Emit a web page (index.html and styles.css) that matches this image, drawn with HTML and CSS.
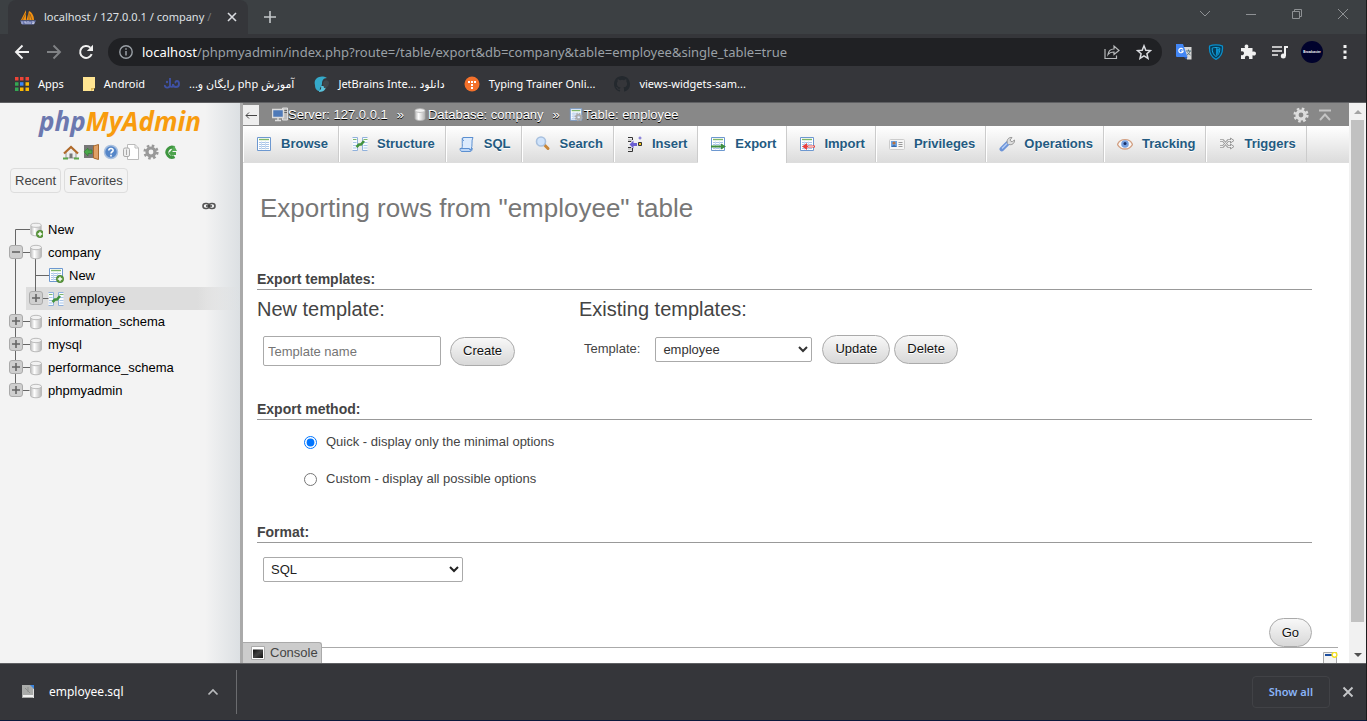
FILE: index.html
```html
<!DOCTYPE html>
<html lang="en">
<head>
<meta charset="utf-8">
<title>localhost / 127.0.0.1 / company / employee | phpMyAdmin</title>
<link rel="stylesheet" href="styles.css">
</head>
<body>
<svg class="defs" aria-hidden="true">
  <defs>
    <linearGradient id="cyl" x1="0" x2="1" y1="0" y2="0"><stop offset="0" stop-color="#bbb"/><stop offset=".35" stop-color="#fff"/><stop offset="1" stop-color="#b4b4b4"/></linearGradient>
    <linearGradient id="term" x1="0" x2="1" y1="0" y2="1"><stop offset="0" stop-color="#111"/><stop offset=".5" stop-color="#444"/><stop offset="1" stop-color="#111"/></linearGradient>
    <symbol id="db" viewBox="0 0 16 16"><path d="M2.500 3.500v9c0 3 11 3 11 0v-9" fill="url(#cyl)" stroke="#bbb"/><ellipse cx="8" cy="3.500" rx="5.500" ry="2.200" fill="#f2f2f2" stroke="#bbb"/></symbol>
    <symbol id="add" viewBox="0 0 16 16"><circle cx="12" cy="12" r="3.700" fill="#5b9a3c" stroke="#3f7a28" stroke-width=".6"/><path d="M12 9.800v4.400M9.800 12h4.400" stroke="#fff" stroke-width="1.400"/></symbol>
    <symbol id="table" viewBox="0 0 16 16"><path d="M1.500 1.500h13v13h-13z" fill="#fff" stroke="#6d98d0"/><path d="M3 3.500h10" stroke="#7fb76b" stroke-width="1.400"/><path d="M3 6.500h10M3 8.500h10M3 10.500h10M3 12.500h10" stroke="#a9c5e8"/><path d="M5.500 5.500v8M9.500 5.500v8" stroke="#c7daf1"/></symbol>
    <symbol id="struct" viewBox="0 0 16 16"><path d="M.5 1.500h5v13h-5M15.500 1.500h-5v13h5" fill="#f7fbff" stroke="#90b1dc"/><path d="M1 3.500h3.500M11.500 3.500h4" stroke="#7fb76b"/><path d="M1 6.500h3.500M1 9.500h3.500M1 12h3.500M11.500 6.500h4M11.500 9.500h4M11.500 12h4" stroke="#a9c5e8"/><path d="M4.500 11 7 8.500h2L12 5" fill="none" stroke="#43933f" stroke-width="2.600"/></symbol>
    <symbol id="gear" viewBox="0 0 16 16"><circle cx="8" cy="8" r="6.300" fill="none" stroke="currentColor" stroke-width="2.600" stroke-dasharray="2.500 2.450"/><circle cx="8" cy="8" r="4" fill="none" stroke="currentColor" stroke-width="3.200"/></symbol>
    <symbol id="plus" viewBox="0 0 14 14"><rect x=".5" y=".5" width="13" height="13" rx="2.500" fill="#cfcfcf" stroke="#aaa"/><path d="M3 7h8M7 3v8" stroke="#666" stroke-width="1.600"/></symbol>
    <symbol id="minus" viewBox="0 0 14 14"><rect x=".5" y=".5" width="13" height="13" rx="2.500" fill="#cfcfcf" stroke="#aaa"/><path d="M3 7h8" stroke="#666" stroke-width="1.600"/></symbol>
  </defs>
</svg>

<div class="browser">
  <header class="tabstrip">
    <div class="tab">
      <svg class="i16" viewBox="0 0 16 16"><path d="M1 11 6 1v10zM6.500 11 9 2c4 2 5 6 5 9z" fill="#f29111"/><path d="M2.500 11 6 4M9 11V4M12 11l-2-6" stroke="#8a5a1a" stroke-width=".8"/><path d="M0 11.500h16l-2 4H2z" fill="#6c78af"/><path d="M2 12.500v2.500M4 13h2v2M8 12v3M10 13v2M12 13h2v1.500h-2" stroke="#dfe2f3" stroke-width=".7" fill="none"/></svg>
      <span class="tab-title">localhost / 127.0.0.1 / company <i>/</i></span>
      <button class="plain" aria-label="Close tab"><svg width="10" height="10" viewBox="0 0 10 10"><path d="m1 1 8 8M9 1 1 9" stroke="#dadce0" stroke-width="1.600"/></svg></button>
    </div>
    <button class="plain newtab" aria-label="New tab"><svg width="12" height="12" viewBox="0 0 12 12"><path d="M6 0v12M0 6h12" stroke="#c4c7ca" stroke-width="1.600"/></svg></button>
    <div class="winctl">
      <button class="plain" aria-label="Search tabs"><svg width="12" height="12" viewBox="0 0 12 12"><path d="m1 3 5 5 5-5" fill="none" stroke="#8e9194"/></svg></button>
      <button class="plain" aria-label="Minimize"><svg width="12" height="12" viewBox="0 0 12 12"><path d="M1 6.500h10" stroke="#8e9194"/></svg></button>
      <button class="plain" aria-label="Restore"><svg width="12" height="12" viewBox="0 0 12 12"><path d="M1.500 3.500h7v7h-7zM3.500 3.500v-2h7v7h-2" fill="none" stroke="#8e9194"/></svg></button>
      <button class="plain" aria-label="Close"><svg width="12" height="12" viewBox="0 0 12 12"><path d="m1 1 10 10M11 1 1 11" stroke="#8e9194"/></svg></button>
    </div>
  </header>

  <div class="toolbar">
    <button class="plain" aria-label="Back"><svg class="i16" viewBox="0 0 16 16"><path d="M15 8H2M8.500 1.500 2 8l6.500 6.500" fill="none" stroke="#f1f1f1" stroke-width="1.900"/></svg></button>
    <button class="plain" aria-label="Forward"><svg class="i16" viewBox="0 0 16 16"><path d="M1 8h13M7.500 1.500 14 8l-6.500 6.500" fill="none" stroke="#808285" stroke-width="1.900"/></svg></button>
    <button class="plain" aria-label="Reload"><svg class="i16" viewBox="0 0 16 16"><path d="M13.700 10.200A6 6 0 1 1 12.300 3.600" fill="none" stroke="#f1f1f1" stroke-width="2"/><path d="M15 .8V7H8.800z" fill="#f1f1f1"/></svg></button>
    <div class="omnibox">
      <svg width="14" height="14" viewBox="0 0 14 14"><circle cx="7" cy="7" r="6.200" fill="none" stroke="#9aa0a6" stroke-width="1.400"/><path d="M7 6v4.500M7 3.300v1.500" stroke="#9aa0a6" stroke-width="1.500"/></svg>
      <span class="url"><b>localhost</b>/phpmyadmin/index.php?route=/table/export&amp;db=company&amp;table=employee&amp;single_table=true</span>
      <svg class="i16" viewBox="0 0 16 16"><path d="M1 5v9.500h11.500v-3M4 10.500c.5-4 3-5.500 6-5.500V2l5 4.500-5 4V8c-3 0-4.500.5-6 2.500z" fill="none" stroke="#b7b9bb" stroke-width="1.200"/></svg>
      <svg class="i16" viewBox="0 0 16 16"><path d="m8 1.800 1.800 4.400 4.700.4-3.600 3.100 1.100 4.600L8 11.800l-4 2.500 1.100-4.600L1.500 6.600l4.700-.4z" fill="none" stroke="#dadce0" stroke-width="1.500"/></svg>
    </div>
    <div class="extensions">
      <svg class="i16" viewBox="0 0 16 16"><path d="M6 3h9.500v12.500H11z" fill="#d7d7d7"/><path d="M0 0h7l4.500 13H1a1 1 0 0 1-1-1z" fill="#4286f5"/><path d="m8 13 2 2.500 1.500-2.500z" fill="#2458b8"/><path d="M7 5.500A2.200 2.200 0 1 0 7.200 7H5" fill="none" stroke="#fff" stroke-width="1.200"/><path d="M10 7h5M12.500 5.500V7M14 7c-.5 2-2 3.500-3 4M11.500 8.500c.5 1 2 2 3 2.500" stroke="#56747f" fill="none"/></svg>
      <svg class="i16" viewBox="0 0 16 16"><path d="M8 .8c3 0 5 .5 6.400 1.200C15 8 13 13 8 15.300 3 13 1 8 1.600 2 3 1.300 5 .8 8 .8z" fill="#063c59" stroke="#0a8fcb" stroke-width="1.300"/><path d="M8 3.500c2 0 3 .3 3.800.6.200 4-1.300 6.900-3.800 8.400-2.500-1.500-4-4.400-3.800-8.400.8-.3 1.800-.6 3.800-.6z" fill="none" stroke="#18a8e0"/><path d="M8 4v8c2-2 3-4 3-7z" fill="#0a8fcb"/></svg>
      <svg class="i16" viewBox="0 0 16 16"><path d="M1 4h4c-1-2 0-3.500 1.500-3.500S9 2 8 4h4.500v3.800c2-1 3.500 0 3.500 1.700s-1.500 2.700-3.500 1.700V15H9c.7-2-.5-3.200-2-3.200S4.500 13 5 15H1v-4c2 .6 3-.3 3-1.700S3 7 1 7.500z" fill="#f1f1f1"/></svg>
      <svg class="i16" viewBox="0 0 16 16"><path d="M0 3h10M0 7h10M0 11h6" stroke="#f1f1f1" stroke-width="1.700"/><path d="M13 12V3h3" fill="none" stroke="#f1f1f1" stroke-width="2"/><circle cx="11.300" cy="12" r="2.500" fill="#f1f1f1"/></svg>
      <span class="avatar">Broadcaster</span>
      <svg class="dots" width="4" height="14" viewBox="0 0 4 14"><path d="M2 0v14" stroke="#f1f1f1" stroke-width="3" stroke-dasharray="3 2.500"/></svg>
    </div>
  </div>

  <nav class="bookmarks">
    <a href="#"><svg width="14" height="14" viewBox="0 0 14 14"><path d="M0 0h3.500v3.500H0zM5 0h3.500v3.500H5zM10.500 0H14v3.500h-3.500z" fill="#ee4437"/><path d="M0 5.200h3.500v3.500H0zM0 10.500h3.500V14H0z" fill="#34a853"/><path d="M5 5.200h3.500v3.500H5z" fill="#3b86f6"/><path d="M10.500 5.200H14v3.500h-3.500zM5 10.500h3.500V14H5zM10.500 10.500H14V14h-3.500z" fill="#fbb904"/></svg>Apps</a>
    <a href="#"><svg width="12" height="14" viewBox="0 0 12 14"><path d="M0 0h12v11h-1v3H0z" fill="#ffe592"/><path d="M8 14v-3h4z" fill="#d9b455"/></svg>Android</a>
    <a href="#"><svg class="i16" viewBox="0 0 16 16"><path d="M1 9c-1 3 5 4 5 0V2M6 10c2 1.500 3 1 3-2M9 8c0 4 6 4 6 0 0-2-1-3-2-3s-2 1-1 2" fill="none" stroke="#3f51a3" stroke-width="1.900"/><circle cx="3" cy="6" r="1.200" fill="#3f51a3"/></svg><span dir="rtl">آموزش php رایگان و...</span></a>
    <a href="#"><svg class="i16" viewBox="0 0 16 16"><path d="M2 9C0 3 7-2 14 2c-4 0-5 3-5 6 0 3-3 3-2 7-3 0-5-2-5-6z" fill="#35a9c9"/><path d="M8 10c1 4-2 4-2 6 5 0 7-3 7-6z" fill="#5bc3dc"/><path d="M10 8c0-4 4-5 6-2 0 4-2 6-5 6z" fill="#42474b"/></svg><span>JetBrains Inte... دانلود</span></a>
    <a href="#"><svg class="i16" viewBox="0 0 16 16"><circle cx="8" cy="8" r="7.500" fill="#f4712b"/><path d="M4 5h2v2H4zM7 5h2v2H7zM10 5h2v2h-2zM7 8h2v2H7zM7 11h2v2H7z" fill="#fff"/></svg>Typing Trainer Onli...</a>
    <a href="#"><svg class="i16" viewBox="0 0 16 16"><path fill="#24292e" d="M8 0C3.580 0 0 3.580 0 8c0 3.540 2.290 6.530 5.470 7.590.4.070.55-.17.55-.38 0-.19-.01-.82-.01-1.490-2.010.37-2.530-.49-2.690-.94-.09-.23-.48-.94-.82-1.130-.28-.15-.68-.52-.01-.53.63-.01 1.080.58 1.230.82.72 1.210 1.870.87 2.330.66.07-.52.28-.87.51-1.070-1.780-.2-3.640-.89-3.640-3.950 0-.87.31-1.590.82-2.150-.08-.2-.36-1.020.08-2.120 0 0 .67-.21 2.200.82a7.600 7.600 0 0 1 4 0c1.530-1.040 2.200-.82 2.200-.82.44 1.100.16 1.920.08 2.120.51.56.82 1.270.82 2.150 0 3.070-1.870 3.750-3.650 3.950.29.25.54.73.54 1.480 0 1.070-.01 1.930-.01 2.200 0 .21.15.46.55.38A8 8 0 0 0 16 8c0-4.420-3.580-8-8-8z"/></svg>views-widgets-sam...</a>
  </nav>

  <div class="viewport">
    <aside class="sidebar">
      <div class="logo"><span>php</span>MyAdmin</div>
      <div class="quick">
        <svg class="i16" viewBox="0 0 16 16"><path d="M3 7v7h10V7L8 3z" fill="#eee" stroke="#999"/><path d="M1 9.500 8 3l7 6.500" fill="none" stroke="#b06a2a" stroke-width="2.200"/><path d="M6.500 9.500h3V14h-3z" fill="#777"/><path d="M0 14.500h5M11 14.500h5" stroke="#5ca84d" stroke-width="2"/></svg>
        <svg class="i16" viewBox="0 0 16 16"><path d="M1 1h10v13H1z" fill="#777"/><path d="M10.500 2l5-1.500v15l-5-1.500z" fill="#dfa066" stroke="#a9692c"/><path d="M9 6v3.500H5V12L1 7.800 5 4v2z" fill="#4aa84a" stroke="#2f7d30" stroke-width=".6"/></svg>
        <svg class="i16" viewBox="0 0 16 16"><circle cx="8" cy="8" r="6.500" fill="#5586c8" stroke="#a9c0df" stroke-width="1.500"/><path d="M5.800 6.500c0-3 4.600-2.500 4.300 0-.1 1.200-2.100 1.400-2.100 3M8 10.800v1.700" fill="none" stroke="#fff" stroke-width="1.600"/></svg>
        <svg class="i16" viewBox="0 0 16 16"><path d="M4.500.5H12L15.500 4v11.500h-11z" fill="#fff" stroke="#bbb"/><path d="M12 .5V4h3.500" fill="none" stroke="#bbb"/><rect x=".5" y="4" width="6" height="8.500" rx="1.500" fill="#eee" stroke="#aaa"/><path d="M3.500 5.500v5.500" stroke="#aaa"/></svg>
        <svg class="i16"><use href="#gear"/></svg>
        <svg class="i16" viewBox="0 0 16 16"><path d="M11.500 12.600A5 5 0 1 1 11.500 4" fill="none" stroke="#3f9640" stroke-width="3"/><path d="M11 1.500 14 7H8z" fill="#57ad56"/><path d="M5.500 9 9.500 5.500V8H13v3H9.500v2z" fill="#4ca34c"/></svg>
      </div>
      <div class="lists"><button>Recent</button><button>Favorites</button></div>
      <div class="link"><svg width="14" height="8" viewBox="0 0 14 8"><rect x="1" y="1.500" width="6" height="5" rx="2.500" fill="none" stroke="#555" stroke-width="1.600"/><rect x="7" y="1.500" width="6" height="5" rx="2.500" fill="none" stroke="#555" stroke-width="1.600"/><path d="M4 4h6" stroke="#333" stroke-width="1.400"/></svg></div>
      <ul class="tree">
        <li><svg class="g1" viewBox="0 0 43 23"><path d="M15.500 23V11.500H30" fill="none" stroke="#666"/><use href="#db" x="28" y="4" width="16" height="15"/><use href="#add" x="28" y="4" width="16" height="16"/></svg><a href="#">New</a></li>
        <li><svg class="g1" viewBox="0 0 43 23"><path d="M15.500 0v23M16 11.500h14M35.500 16v7" fill="none" stroke="#666"/><use href="#minus" x="9" y="4" width="14" height="14"/><use href="#db" x="28" y="3" width="16" height="16"/></svg><a href="#">company</a></li>
        <li><svg class="g0" viewBox="0 0 26 23"><path d="M15.500 0v23" stroke="#666"/></svg><svg class="g2" viewBox="0 0 38 23"><path d="M9.500 0v23M10 11.500h13" fill="none" stroke="#666"/><use href="#table" x="22" y="3" width="16" height="16"/><use href="#add" x="22" y="3" width="16" height="16"/></svg><a href="#">New</a></li>
        <li><svg class="g0" viewBox="0 0 26 23"><path d="M15.500 0v23" stroke="#666"/></svg><div class="current"><svg class="g2" viewBox="0 0 38 23"><path d="M9.500 0v11.500H23" fill="none" stroke="#666"/><use href="#plus" x="3" y="4" width="14" height="14"/><use href="#struct" x="22" y="4" width="16" height="16"/></svg><a href="#">employee</a></div></li>
        <li><svg class="g1" viewBox="0 0 43 23"><path d="M15.500 0v23M16 11.500h14" fill="none" stroke="#666"/><use href="#plus" x="9" y="4" width="14" height="14"/><use href="#db" x="28" y="4" width="16" height="16"/></svg><a href="#">information_schema</a></li>
        <li><svg class="g1" viewBox="0 0 43 23"><path d="M15.500 0v23M16 11.500h14" fill="none" stroke="#666"/><use href="#plus" x="9" y="4" width="14" height="14"/><use href="#db" x="28" y="4" width="16" height="16"/></svg><a href="#">mysql</a></li>
        <li><svg class="g1" viewBox="0 0 43 23"><path d="M15.500 0v23M16 11.500h14" fill="none" stroke="#666"/><use href="#plus" x="9" y="4" width="14" height="14"/><use href="#db" x="28" y="4" width="16" height="16"/></svg><a href="#">performance_schema</a></li>
        <li><svg class="g1" viewBox="0 0 43 23"><path d="M15.500 0v11.500h14" fill="none" stroke="#666"/><use href="#plus" x="9" y="4" width="14" height="14"/><use href="#db" x="28" y="4" width="16" height="16"/></svg><a href="#">phpmyadmin</a></li>
      </ul>
    </aside>

    <main class="main">
      <div class="crumbs">
        <button class="collapse" aria-label="Hide panel"><svg width="12" height="8" viewBox="0 0 12 8"><path d="M12 4.500H1M4 1.500l-3 3 3 3" fill="none" stroke="#444"/></svg></button>
        <svg class="i16" viewBox="0 0 16 16"><path d="M10.500 1h5v12h-5z" fill="#bbb" stroke="#ddd"/><path d="M12 3.500h3M12 5.500h3" stroke="#666"/><path d="M.5 2.500h11v8H.5z" fill="#4f7ab8" stroke="#dcdcdc" stroke-width="1.500"/><path d="M3 13.500h6M6 11v2" stroke="#ddd" stroke-width="1.500"/></svg><a href="#">Server: 127.0.0.1</a><span class="sep">»</span>
        <svg class="crumb-icon"><use href="#db"/></svg><a href="#">Database: company</a><span class="sep">»</span>
        <svg class="crumb-icon" viewBox="0 0 16 16"><use href="#table" width="16" height="16"/><g color="#aaa"><use href="#gear" x="6" y="6" width="10" height="10"/></g></svg><a href="#">Table: employee</a>
        <div class="crumb-tools">
          <svg class="i16"><use href="#gear"/></svg>
          <svg width="12" height="12" viewBox="0 0 12 12"><path d="M0 1.500h12M1 11l5-5.500 5 5.500" fill="none" stroke="#c4c4c4" stroke-width="1.900"/></svg>
        </div>
      </div>

      <nav class="topmenu">
        <a href="#"><svg class="i16"><use href="#table"/></svg>Browse</a>
        <a href="#"><svg class="i16"><use href="#struct"/></svg>Structure</a>
        <a href="#"><svg class="i16" viewBox="0 0 16 16"><path d="M4 1.500h10c-2 3 0 8-2 12H2.500c2-4-.5-8 1.500-12z" fill="#dcebfd" stroke="#5b8fd0"/><path d="M1 12.500h9.500c0 3 2.500 2 2.500-.5v2c-.5 1-1 1.500-2 1.500H3c-1.500 0-2-1.500-2-3z" fill="#bcd6f7" stroke="#5b8fd0"/><path d="M4 1.500c-1.500 1-1 3 1 3" fill="none" stroke="#5b8fd0"/></svg>SQL</a>
        <a href="#"><svg class="i16" viewBox="0 0 16 16"><path d="m9 8.500 4 4" stroke="#c88638" stroke-width="3" stroke-linecap="round"/><circle cx="6" cy="5.500" r="4.500" fill="#cfe3fb" stroke="#a8c0de" stroke-width="1.600"/></svg>Search</a>
        <a href="#"><svg class="i16" viewBox="0 0 16 16"><path d="M1 1.500h4.500V4M1 15.500h4.500V12" fill="none" stroke="#333"/><path d="M1 3h4v3H1zM1 11h4v3H1z" fill="#ccc"/><path d="M1 5.500h3M1 11.500h3" stroke="#333"/><path d="m2.500 8.500 4-4V7H10v3H6.500v2.500z" fill="#6a5fd0"/><path d="M11.500 6.500h3v3h-3z" fill="#f8c81c" stroke="#333"/><path d="M13 .5v3M11.500 2h3" stroke="#6a5fd0"/></svg>Insert</a>
        <a href="#" class="active"><svg class="i16"><use href="#table"/><path d="M1 9.500h10V7.500l5 3-5 3v-2H1z" fill="#3f8f3f"/></svg>Export</a>
        <a href="#"><svg class="i16"><use href="#table"/><path d="M16 9.500H8V7l-5 3.500L8 14v-2.500h8z" fill="#e8413f"/><path d="M9 10.500h6" stroke="#f8b5b0"/></svg>Import</a>
        <a href="#"><svg class="i16" viewBox="0 0 16 16"><rect x=".5" y="3.500" width="15" height="10" rx="1" fill="#f6f6f6" stroke="#ccc"/><path d="M2 5h6v6H2z" fill="#6aa5e6"/><circle cx="5" cy="7" r="1.600" fill="#b9703c"/><path d="M2.500 11c.5-2.500 4.500-2.500 5 0z" fill="#3a69a8"/><path d="M9.500 6.500h4M9.500 8.500h4M9.500 10.500h4" stroke="#999"/></svg>Privileges</a>
        <a href="#"><svg class="i16" viewBox="0 0 16 16"><path d="m2.800 13.200 6-6" stroke="#6b93d8" stroke-width="4.500" stroke-linecap="round"/><path d="m3 12.500 5-5" stroke="#b7cff5" stroke-width="1.500"/><path d="M8.500 7.500c-1.500-4 1.500-6.500 4.500-6L11 4l1 1.500h1.500L15.500 4c.5 3-2.500 5.500-5.500 4.500" fill="#ddd" stroke="#999"/></svg>Operations</a>
        <a href="#"><svg class="i16" viewBox="0 0 16 16"><path d="M.5 8.500C3 2 13 2 15.500 8.500 12 14.500 4 14.500.5 8.500z" fill="#f8f8f8" stroke="#d3a184" stroke-width="1.300"/><circle cx="8" cy="8" r="3.800" fill="#76a0e0"/><circle cx="8" cy="7.500" r="1.500" fill="#172e66"/></svg>Tracking</a>
        <a href="#"><svg class="i16" viewBox="0 0 16 16"><path d="M1 4.500h3l5 6h4M1 10.500h3l5-6h4" fill="none" stroke="#999" stroke-width="2.600"/><path d="m11.500 2 3.500 2.500L11.500 7zM11.500 8l3.500 2.500-3.500 2.500z" fill="#eee" stroke="#999"/><path d="M1 4.500h3l5 6h4M1 10.500h3l5-6h4" fill="none" stroke="#eee"/></svg>Triggers</a>
      </nav>

      <form class="page">
        <h1>Exporting rows from "employee" table</h1>
        <section class="templates">
          <h2>Export templates:</h2>
          <div class="cols">
            <div class="col-new">
              <h3>New template:</h3>
              <div class="row"><input type="text" class="name" placeholder="Template name" aria-label="Template name"><button type="button" class="btn">Create</button></div>
            </div>
            <div>
              <h3>Existing templates:</h3>
              <div class="row existing"><label for="tpl">Template:</label><select id="tpl" class="tpl"><option>employee</option></select><button type="button" class="btn">Update</button><button type="button" class="btn del">Delete</button></div>
            </div>
          </div>
        </section>
        <section class="method">
          <h2>Export method:</h2>
          <label><input type="radio" name="method" checked>Quick - display only the minimal options</label>
          <label><input type="radio" name="method">Custom - display all possible options</label>
        </section>
        <section class="format">
          <h2><label for="fmt">Format:</label></h2>
          <select id="fmt" class="fmt"><option>SQL</option></select>
        </section>
        <div class="submit"><button type="button" class="btn">Go</button></div>
      </form>

      <div class="console">
        <button class="console-tab"><svg width="14" height="14" viewBox="0 0 14 14"><path d="M.5.5h13v13H.5z" fill="#fff" stroke="#aaa"/><path d="M2 3.500h10V12H2z" fill="url(#term)"/></svg>Console</button>
        <div class="console-line"><svg width="15" height="11" viewBox="0 0 15 11"><path d="M.5 11V.5h13V11" fill="#f4f4f4" stroke="#aaa"/><path d="M2 3h7" stroke="#1d4fa0" stroke-width="2"/><circle cx="11.500" cy="2.800" r="2.400" fill="#fff" stroke="#f5e020" stroke-width="1.400"/></svg></div>
      </div>
    </main>

    <div class="scrollbar"><i class="up"></i><div class="thumb"></div><i class="down"></i></div>
  </div>

  <footer class="downloads">
    <svg width="14" height="16" viewBox="0 0 14 16"><path d="M1 1h12v13H1z" fill="#a9aba9"/><path d="M4 4l5 5M7 3v5" stroke="#8b8d8b"/><path d="M9 1h4v4z" fill="#3b86e0"/><path d="M2 12h11" stroke="#f1f1f1" stroke-width="2"/><path d="M12.500 5v9" stroke="#ddd"/></svg>
    <span class="file">employee.sql</span>
    <button class="plain" aria-label="More"><svg width="12" height="8" viewBox="0 0 12 8"><path d="m1.500 6.500 4.500-4.500 4.500 4.500" fill="none" stroke="#b9bbbd" stroke-width="1.700"/></svg></button>
    <div class="rule"></div>
    <button class="showall">Show all</button>
    <button class="plain" aria-label="Close"><svg width="12" height="12" viewBox="0 0 12 12"><path d="m1.500 1.500 9 9M10.500 1.500l-9 9" stroke="#c4c6c8" stroke-width="1.900"/></svg></button>
  </footer>
</div>
</body>
</html>
```
FILE: styles.css
```css
* { box-sizing: border-box; }
body { margin: 0; font: 13px/18px "Liberation Sans", Arial, sans-serif; color: #444; }
a { color: inherit; text-decoration: none; }
button, input, select { font: inherit; }
svg { flex: none; display: block; }
.defs { position: absolute; width: 0; height: 0; }
.i16 { width: 16px; height: 16px; }
.plain { display: flex; padding: 0; border: 0; background: none; }

.browser { display: flex; flex-direction: column; height: 100vh; background: #35363a; border-right: 1px solid #1b1b1c; border-bottom: 1px solid #0b1a3c; }

.tabstrip { display: flex; align-items: center; height: 34px; padding-left: 8px; background: #3c4043; font: 11px/16px "Noto Sans", sans-serif; color: #dfe1e5; }
.tab { display: flex; align-items: center; width: 240px; height: 34px; padding: 0 11px 0 12px; gap: 8px; background: #35363a; border-radius: 8px 8px 0 0; }
.tab-title { flex: 1; white-space: nowrap; overflow: hidden; }
.tab-title i { font-style: normal; color: #777; }
.newtab { margin-left: 16px; }
.winctl { display: flex; gap: 34px; margin: -6px 17px 0 auto; }

.toolbar { display: flex; align-items: center; gap: 16px; height: 36px; padding: 0 19px 0 14px; }
.omnibox { flex: 1; display: flex; align-items: center; gap: 16px; height: 28px; margin-left: -2px; padding: 0 10px 0 11px; border-radius: 14px; background: #202124; }
.url { flex: 1; margin-left: -7px; font: 13px/20px "Noto Sans", sans-serif; color: #9aa0a6; white-space: nowrap; overflow: hidden; }
.url b { font-weight: 400; color: #fff; }
.extensions { display: flex; align-items: center; gap: 16px; margin-left: -2px; }
.avatar { display: flex; align-items: center; justify-content: center; width: 22px; height: 22px; margin: 0 4px 0 -3px; border-radius: 50%; background: #00022c; color: #fff; font: bold 3px/4px "Liberation Sans", sans-serif; }

.bookmarks { display: flex; align-items: center; height: 32px; padding: 0 0 4px 15px; gap: 19px; font: 11px/18px "Noto Sans", "DejaVu Sans", sans-serif; color: #fff; white-space: nowrap; }
.bookmarks a { display: flex; align-items: center; gap: 9px; }

.viewport { flex: 1; display: flex; min-height: 0; border-top: 1px solid #5f6063; }

.sidebar { width: 243px; flex: none; border-right: 3px solid #aaa; background: linear-gradient(to right, #f3f3f3 205px, #dce0e3 240px); }
.logo { text-align: center; font: italic bold 26px/36px "Noto Sans", sans-serif; color: #f89c0e; }
.logo span { color: #6c78af; }
.quick { display: flex; gap: 4px; margin: 5px 0 0 63px; color: #999; }
.lists { display: flex; gap: 3px; margin: 8px 0 0 10px; }
.lists button { height: 25px; padding: 0 4px; border: 1px solid #ddd; border-radius: 4px; background: none; color: #444; }
.link { display: flex; justify-content: flex-end; margin: 9px 24px 0 0; }
.tree { list-style: none; margin: 8px 0 0; padding: 0; color: #000; }
.tree li, .current { display: flex; align-items: center; height: 23px; }
.tree a { margin-left: 5px; }
.g1 { width: 43px; height: 23px; }
.g0 { width: 26px; height: 23px; }
.g2 { width: 38px; height: 23px; }
.current { flex: 1; background: linear-gradient(to right, #ddd 80%, transparent); }

.main { flex: 1; display: flex; flex-direction: column; position: relative; min-width: 0; background: #fff; }
.crumbs { display: flex; align-items: center; height: 23px; flex: none; background: #888; color: #fff; text-shadow: 0 1px 0 #000; }
.collapse { display: flex; align-items: center; justify-content: center; width: 16px; height: 20px; margin-right: 13px; padding: 0; border: 0; background: #eee; }
.sep { margin: 0 9px; }
.crumb-icon { width: 14px; height: 15px; margin-right: 1px; }
.crumb-tools { display: flex; align-items: center; gap: 10px; margin: 0 18px 0 auto; color: #ddd; }

.topmenu { display: flex; flex: none; height: 37px; background: linear-gradient(#fff, #dcdcdc); border-bottom: 1px solid #ddd; }
.topmenu a { display: flex; align-items: center; height: 36px; padding: 0 10px 0 12px; gap: 9px; border-right: 1px solid #ccc; border-left: 1px solid #fff; font-weight: bold; color: #235a81; text-shadow: 0 1px 0 #fff; }
.topmenu .active { height: 37px; padding-bottom: 1px; border-left: 0; background: #fff; }
.topmenu .active + a { border-left: 0; }

.page { padding: 30px 37px 0 14px; }
h1, h2, h3 { margin: 0; }
h1 { padding-left: 3px; font-weight: 400; font-size: 26px; line-height: 30px; color: #777; }
h2 { border-bottom: 1px solid #999; font-size: 14px; line-height: 19px; }
h3 { font-weight: 400; font-size: 20px; line-height: 24px; }
.templates { margin-top: 47px; }
.cols { display: flex; margin-top: 7px; }
.col-new { flex: 0 0 322px; max-width: 31%; }
.row { display: flex; align-items: center; margin-top: 15px; height: 30px; }
.name { width: 178px; height: 30px; margin: 0 9px 0 6px; padding: 0 4px; border: 1px solid #aaa; border-radius: 2px; }
.btn { height: 29px; padding: 0 12px; border: 1px solid #aaa; border-radius: 15px; background: linear-gradient(#f8f8f8, #d8d8d8); color: #111; text-shadow: 0 1px 0 #fff; }
.existing { height: 28px; margin-top: 14px; padding-left: 5px; }
.tpl { width: 157px; height: 25px; margin: 0 10px 0 15px; padding: 0 3px; border: 1px solid #aaa; border-radius: 2px; background: #fff; color: #333; }
.del { margin-left: 4px; }
.method { margin-top: 34px; }
.method label { display: flex; align-items: center; height: 18px; margin: 13px 0 0 47px; }
.method label + label { margin-top: 19px; }
.method input { width: 13px; height: 13px; margin: 0 9px 0 0; }
.format { margin-top: 35px; }
.fmt { display: block; width: 200px; height: 25px; margin: 14px 0 0 6px; padding: 0 3px; border: 1px solid #aaa; border-radius: 2px; background: #fff; color: #222; }
.submit { display: flex; justify-content: flex-end; margin-top: 36px; }

.console { position: absolute; left: 0; right: 0; bottom: 0; display: flex; align-items: flex-end; }
.console-tab { display: flex; align-items: center; gap: 5px; height: 21px; padding: 0 3px 0 8px; border: 1px solid #aaa; border-width: 1px 1px 0 0; border-radius: 0 3px 0 0; background: #ccc; color: #444; }
.console-line { flex: 1; display: flex; justify-content: flex-end; align-items: flex-end; height: 16px; margin-right: 11px; border-top: 1px solid #aaa; }

.scrollbar { display: flex; flex-direction: column; align-items: center; width: 17px; flex: none; background: #f1f1f1; }
.thumb { flex: 1; width: 13px; margin: 6px 0 31px; background: #c1c1c1; }
.up, .down { border: 4px solid transparent; }
.up { margin-top: 3px; border-bottom-color: #a3a3a3; }
.down { border-top-color: #505050; margin-bottom: 2px; }

.downloads { display: flex; align-items: center; height: 57px; flex: none; padding: 0 12px 0 21px; border-top: 1px solid #5f6063; color: #fff; font: 12px/18px "Noto Sans", sans-serif; }
.file { width: 158px; margin-left: 14px; }
.rule { width: 1px; height: 44px; margin-left: 17px; background: #6b6c6f; }
.showall { height: 32px; margin: 0 12px 0 auto; padding: 0 16px; border: 1px solid #414246; border-radius: 4px; background: none; color: #8ab4f8; font-size: 11px; font-weight: 600; }
```
